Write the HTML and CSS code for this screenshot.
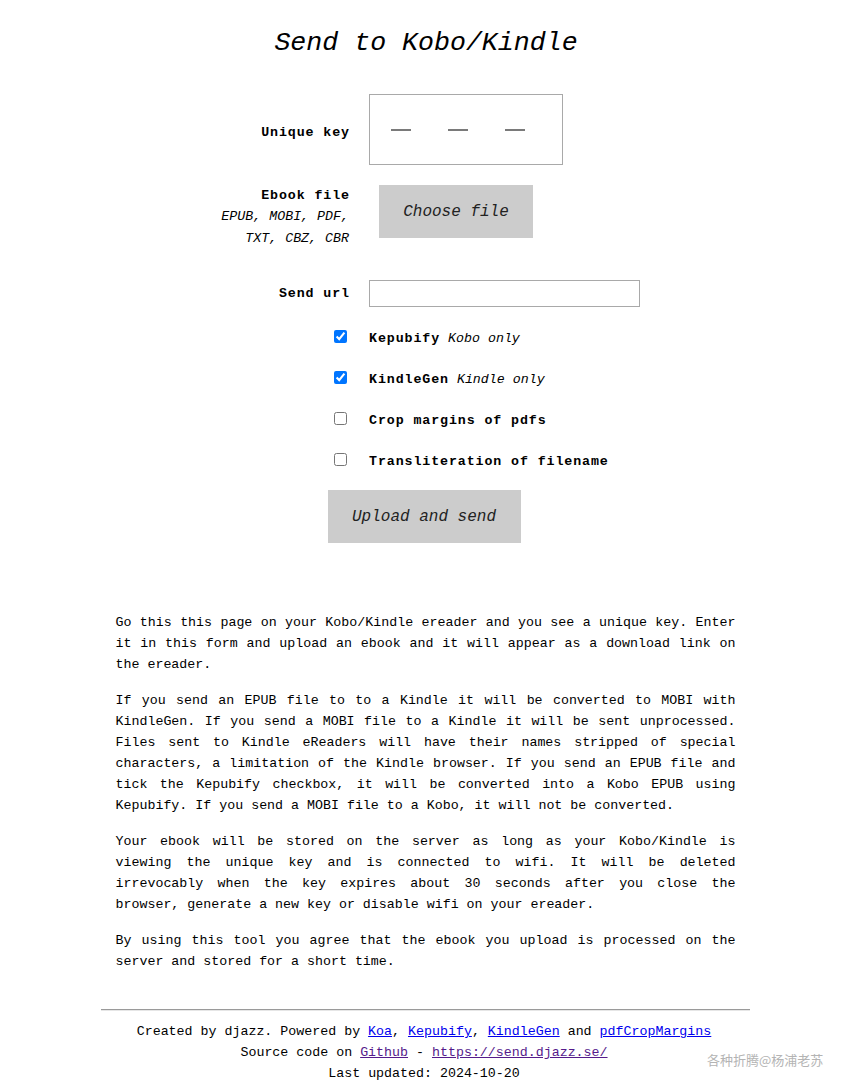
FILE: index.html
```html
<!DOCTYPE html>
<html lang="en">
<head>
<meta charset="utf-8">
<title>Send to Kobo/Kindle</title>
<link rel="stylesheet" href="styles.css">
</head>
<body>
<h1 class="title">Send to Kobo/Kindle</h1>
<form class="form">
  <div class="row row-key">
    <label class="label label-key">Unique key</label>
    <div class="keybox"><span class="dash"></span><span class="dash"></span><span class="dash"></span></div>
  </div>
  <div class="row row-file">
    <div class="label">
      <div>Ebook file</div>
      <div class="types">EPUB, MOBI, PDF,<br>TXT, CBZ, CBR</div>
    </div>
    <button type="button" class="btn btn-file">Choose file</button>
  </div>
  <div class="row row-url">
    <label class="label">Send url</label>
    <input class="url" type="text">
  </div>
  <div class="row row-check">
    <div class="label"><input type="checkbox" checked></div>
    <div class="opt"><b>Kepubify</b> <i>Kobo only</i></div>
  </div>
  <div class="row row-check">
    <div class="label"><input type="checkbox" checked></div>
    <div class="opt"><b>KindleGen</b> <i>Kindle only</i></div>
  </div>
  <div class="row row-check">
    <div class="label"><input type="checkbox"></div>
    <div class="opt"><b>Crop margins of pdfs</b></div>
  </div>
  <div class="row row-check">
    <div class="label"><input type="checkbox"></div>
    <div class="opt"><b>Transliteration of filename</b></div>
  </div>
  <div class="submit-row">
    <button type="button" class="btn btn-send">Upload and send</button>
  </div>
</form>
<div class="info">
  <p>Go this this page on your Kobo/Kindle ereader and you see a unique key. Enter it in this form and upload an ebook and it will appear as a download link on the ereader.</p>
  <p>If you send an EPUB file to to a Kindle it will be converted to MOBI with KindleGen. If you send a MOBI file to a Kindle it will be sent unprocessed. Files sent to Kindle eReaders will have their names stripped of special characters, a limitation of the Kindle browser. If you send an EPUB file and tick the Kepubify checkbox, it will be converted into a Kobo EPUB using Kepubify. If you send a MOBI file to a Kobo, it will not be converted.</p>
  <p>Your ebook will be stored on the server as long as your Kobo/Kindle is viewing the unique key and is connected to wifi. It will be deleted irrevocably when the key expires about 30 seconds after you close the browser, generate a new key or disable wifi on your ereader.</p>
  <p>By using this tool you agree that the ebook you upload is processed on the server and stored for a short time.</p>
</div>
<hr class="rule">
<footer class="footer">
  <div>Created by djazz. Powered by <a href="#koa">Koa</a>, <a href="#kepubify">Kepubify</a>, <a href="#kindlegen">KindleGen</a> and <a href="#pdfcrop">pdfCropMargins</a></div>
  <div>Source code on <a class="visited" href="#github">Github</a> - <a class="visited" href="#site">https://send.djazz.se/</a></div>
  <div>Last updated: 2024-10-20</div>
</footer>
<div class="watermark">各种折腾@杨浦老苏</div>
</body>
</html>
```

FILE: styles.css
```css
html, body {
  margin: 0;
  padding: 0;
  background: #fff;
}
body {
  position: relative;
  width: 846px;
  min-height: 1087px;
  font-family: "Liberation Mono", "DejaVu Sans Mono", monospace;
  font-size: 13.3px;
  line-height: 21px;
  color: #000;
}
.title {
  margin: 0;
  padding-top: 23px;
  padding-left: 6px;
  font-size: 26.6px;
  line-height: 40px;
  font-style: italic;
  font-weight: normal;
  text-align: center;
  color: #000;
}
.form {
  margin-top: 31px;
  display: flex;
  flex-direction: column;
}
.row {
  display: flex;
  gap: 19px;
}
.label {
  width: 350px;
  flex: none;
  text-align: right;
  font-weight: bold;
  letter-spacing: 0.9px;
}
.label-key {
  padding-top: 5px;
}
.row-key { align-items: center; }
.keybox {
  box-sizing: border-box;
  width: 194px;
  height: 71px;
  border: 1px solid #a9a9a9;
  display: flex;
  align-items: center;
  gap: 37px;
  padding-left: 21px;
}
.dash {
  display: block;
  width: 20px;
  height: 2px;
  background: #7a7a7a;
}
.row-file {
  margin-top: 20px;
  align-items: flex-start;
}
.types {
  font-weight: normal;
  font-style: italic;
  letter-spacing: 0;
  line-height: 22px;
  padding-right: 1px;
}
.btn {
  border: 0;
  background: #ccc;
  font-family: "Liberation Mono", "DejaVu Sans Mono", monospace;
  font-style: italic;
  font-size: 16px;
  color: #222;
  padding: 0;
  cursor: pointer;
}
.btn-file {
  margin-left: 10px;
  width: 154px;
  height: 53px;
}
.row-url {
  margin-top: 30px;
  align-items: center;
}
.url {
  box-sizing: border-box;
  width: 271px;
  height: 27px;
  margin: 0;
  border: 1px solid #a9a9a9;
  font: inherit;
}
.row-check {
  margin-top: 20px;
  height: 21px;
  align-items: center;
}
.row-url + .row-check { margin-top: 21px; }
.row-check input {
  width: 13px;
  height: 13px;
  margin: 0 3px 0 0;
  vertical-align: -1px;
  accent-color: #0075ff;
}
.opt b {
  letter-spacing: 0.9px;
}
.opt i {
  font-style: italic;
}
.submit-row {
  margin-top: 18px;
  display: flex;
  justify-content: center;
  padding-left: 2px;
}
.btn-send {
  width: 193px;
  height: 53px;
}
.info {
  width: 620px;
  margin: 69px auto 0;
  padding-left: 5px;
}
.info p {
  margin: 0 0 15px;
  text-align: justify;
}
.rule {
  width: 649px;
  margin: 37px auto 0;
  padding-left: 0;
  border: 0;
  border-top: 1px solid #9a9a9a;
  border-bottom: 1px solid #e6e6e6;
  height: 0;
  position: relative;
  left: 2px;
}
.footer {
  margin-top: 10px;
  text-align: center;
  padding-left: 2px;
}
.footer a {
  color: #0000ee;
  text-decoration: underline;
}
.footer a.visited {
  color: #551a8b;
}
.watermark {
  position: absolute;
  left: 707px;
  top: 1050px;
  font-family: "Noto Sans CJK SC", "Noto Sans", sans-serif;
  font-size: 13px;
  line-height: 20px;
  color: #b4b4b4;
  letter-spacing: 0;
}
```
